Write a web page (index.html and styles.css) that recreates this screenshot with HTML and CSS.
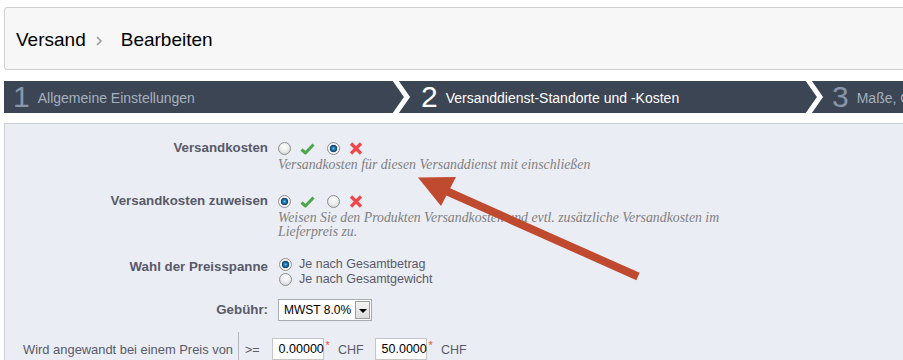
FILE: index.html
```html
<!DOCTYPE html>
<html lang="de">
<head>
  <meta charset="UTF-8" />
  <title>Versand &gt; Bearbeiten</title>
  <link rel="stylesheet" href="styles.css">
</head>
<body>
  <div class="page">
    <div class="toolbar">
      <h2 class="crumbs">
        <span>Versand</span>
        <svg class="crumb-sep" width="8" height="10" viewBox="0 0 8 10"><polyline points="2,1 6,5 2,9" fill="none" stroke="#9a9a9a" stroke-width="1.6"/></svg>
        <span>Bearbeiten</span>
      </h2>
    </div>

    <div class="steps">
      <div class="step step-one"><span class="num">1</span><span class="name">Allgemeine Einstellungen</span></div>
      <svg class="step-sep" width="20" height="32" viewBox="0 0 20 32"><polyline points="2,-4 16,16 2,36" fill="none" stroke="#fff" stroke-width="5"/></svg>
      <div class="step step-two current"><span class="num">2</span><span class="name">Versanddienst-Standorte und -Kosten</span></div>
      <svg class="step-sep" width="20" height="32" viewBox="0 0 20 32"><polyline points="2,-4 16,16 2,36" fill="none" stroke="#fff" stroke-width="5"/></svg>
      <div class="step step-three"><span class="num">3</span><span class="name">Maße, Gewicht</span></div>
    </div>

    <div class="panel">
      <div class="row row-shipping">
        <label class="lbl">Versandkosten</label>
        <div class="field">
          <div class="toggle">
            <input type="radio" class="radio" name="is_free">
            <svg class="ico ico-yes" width="15" height="12" viewBox="0 0 15 12"><path d="M1.5 6.5 L5.5 10 L13.5 1.5" fill="none" stroke="#4ea64c" stroke-width="3" stroke-linejoin="round"/></svg>
            <input type="radio" class="radio" name="is_free" checked>
            <svg class="ico ico-no" width="14" height="13" viewBox="0 0 14 13"><path d="M2 1.5 L12 11.5 M12 1.5 L2 11.5" fill="none" stroke="#f0474b" stroke-width="3.2"/></svg>
          </div>
          <p class="desc">Versandkosten für diesen Versanddienst mit einschließen</p>
        </div>
      </div>

      <div class="row row-assign">
        <label class="lbl">Versandkosten zuweisen</label>
        <div class="field">
          <div class="toggle">
            <input type="radio" class="radio" name="handling" checked>
            <svg class="ico ico-yes" width="15" height="12" viewBox="0 0 15 12"><path d="M1.5 6.5 L5.5 10 L13.5 1.5" fill="none" stroke="#4ea64c" stroke-width="3" stroke-linejoin="round"/></svg>
            <input type="radio" class="radio" name="handling">
            <svg class="ico ico-no" width="14" height="13" viewBox="0 0 14 13"><path d="M2 1.5 L12 11.5 M12 1.5 L2 11.5" fill="none" stroke="#f0474b" stroke-width="3.2"/></svg>
          </div>
          <p class="desc">Weisen Sie den Produkten Versandkosten und evtl. zusätzliche Versandkosten im Lieferpreis zu.</p>
        </div>
      </div>

      <div class="row row-range">
        <label class="lbl">Wahl der Preisspanne</label>
        <div class="field choices">
          <label class="choice"><input type="radio" class="radio" name="billing" checked> Je nach Gesamtbetrag</label>
          <label class="choice"><input type="radio" class="radio" name="billing"> Je nach Gesamtgewicht</label>
        </div>
      </div>

      <div class="row row-tax">
        <label class="lbl">Gebühr:</label>
        <div class="field">
          <div class="select"><span class="select-val">MWST 8.0%</span><span class="select-btn"></span></div>
        </div>
      </div>

      <div class="ranges">
        <div class="range-lbl">Wird angewandt bei einem Preis von</div>
        <div class="range-cell">
          <span class="op">&gt;=</span>
          <span class="num-input">0.00000</span><sup class="req">*</sup>
          <span class="cur">CHF</span>
          <span class="num-input">50.0000</span><sup class="req">*</sup>
          <span class="cur">CHF</span>
        </div>
      </div>
    </div>

    <!-- annotation arrow drawn over the form -->
    <svg class="arrow" width="903" height="360" viewBox="0 0 903 360">
      <line x1="444" y1="190" x2="638" y2="276.5" stroke="#c04a2f" stroke-width="8"/>
      <polygon points="418,177.5 456,177 441,206" fill="#c04a2f"/>
    </svg>
  </div>
</body>
</html>
```

FILE: styles.css
```css
* { box-sizing: border-box; }

html, body {
  margin: 0;
  height: 100%;
  overflow: hidden;
  background: #fff;
  font-family: "Liberation Sans", Arial, sans-serif;
  font-size: 12px;
  color: #585a69;
}

.page {
  position: relative;
  width: 1200px;
  padding: 7px 0 0 4px;
}

/* toolbar with breadcrumb */
.toolbar {
  height: 63px;
  border: 1px solid #cfcfcf;
  border-radius: 3px;
  background: #f7f7f7;
  display: flex;
  align-items: center;
  padding: 2px 0 0 11px;
}
.crumbs {
  margin: 0;
  font-size: 19px;
  font-weight: normal;
  color: #000;
  display: flex;
  align-items: center;
}
.crumb-sep { margin: 2px 18px 0 9px; }

/* wizard steps */
.steps {
  display: flex;
  height: 32px;
  margin-top: 11px;
  background: #3c4554;
}
.step {
  display: flex;
  align-items: center;
  color: #a6b0bf;
  white-space: nowrap;
  overflow: hidden;
}
.step-one { width: 387px; padding-left: 9px; }
.step-two { width: 393px; padding-left: 10px; }
.step-three { flex: 1; padding-left: 8px; }
.step .num {
  font-size: 30px;
  line-height: 32px;
  color: #8796ab;
  margin-right: 8px;
}
.step .name {
  font-size: 14px;
  padding-top: 1px;
}
.step.current .num,
.step.current .name { color: #fff; }
.step-sep { flex: none; display: block; }

/* form panel */
.panel {
  margin-top: 10px;
  border-top: 1px solid #ccced7;
  border-left: 1px solid #ccced7;
  background: #ebedf4;
  padding: 16px 0 20px;
  min-height: 260px;
}

.row {
  display: flex;
  align-items: flex-start;
}
.row-assign { margin-top: 21px; }
.row-range { margin-top: 17px; }
.row-tax { margin-top: 13px; align-items: center; }

.lbl {
  width: 263px;
  text-align: right;
  font-weight: bold;
  font-size: 13.3px;
  line-height: 16px;
  color: #585a69;
}
.row-range .lbl { padding-top: 3px; }

.field { margin-left: 10px; }

.toggle {
  display: flex;
  align-items: center;
  height: 16px;
  padding-top: 1px;
}
.toggle .radio { margin-right: 9px; }
.ico-yes { margin-right: 12px; }

.radio {
  appearance: none;
  -webkit-appearance: none;
  width: 13px;
  height: 13px;
  margin: 0;
  border-radius: 50%;
  border: 1px solid #8e8f8f;
  background: radial-gradient(circle at 50% 35%, #ffffff 0, #eeeeee 45%, #cacaca 100%);
  flex: none;
}
.radio:checked {
  background: radial-gradient(circle at 50% 50%, #5fc3f2 0, #1f73ad 1.8px, #0f3f6b 3.4px, #e9e9e9 4px, #f7f7f7 5px, #cccccc 100%);
}

.desc {
  margin: 2px 0 0;
  width: 470px;
  font-family: "Liberation Serif", Georgia, serif;
  font-style: italic;
  font-size: 13.8px;
  line-height: 14px;
  color: #7f7f7f;
}

.choices { display: flex; flex-direction: column; }
.choice {
  display: flex;
  align-items: center;
  height: 15px;
  font-size: 12.5px;
  color: #585a69;
}
.choice .radio { margin: 2px 7px 0 1px; }

.select {
  display: flex;
  align-items: center;
  width: 94px;
  height: 22px;
  border: 1px solid #a5acb2;
  background: #fff;
  padding: 0 1px 0 5px;
  color: #000;
  font-size: 12px;
}
.select-val { flex: 1; }
.select-btn {
  position: relative;
  width: 15px;
  height: 18px;
  border: 1px solid #9c9c9c;
  background: linear-gradient(#f4f4f4, #dcdcdc);
}
.select-btn::after {
  content: "";
  position: absolute;
  left: 3px;
  top: 7px;
  border-left: 4px solid transparent;
  border-right: 4px solid transparent;
  border-top: 4px solid #000;
}

.ranges {
  display: flex;
  margin-top: 11px;
}
.range-lbl {
  width: 234px;
  text-align: right;
  padding: 10px 5px 0 0;
  border-right: 1px solid #b4b6bf;
  font-size: 12.9px;
  line-height: 16px;
  height: 40px;
}
.range-cell {
  display: flex;
  align-items: flex-start;
  padding: 6px 0 0 6px;
  font-size: 12.5px;
}
.op { margin: 5px 12px 0 0; }
.num-input {
  width: 52px;
  height: 22px;
  border: 1px solid #c5c5c5;
  background: #fff;
  color: #000;
  padding: 3px 0 0 6px;
  line-height: 15px;
}
.req {
  color: #e6532a;
  font-size: 11px;
  line-height: 11px;
  margin: 2px 8px 0 2px;
}
.cur { margin: 5px 11px 0 0; }

.arrow {
  position: absolute;
  left: 0;
  top: 0;
  pointer-events: none;
}
```
